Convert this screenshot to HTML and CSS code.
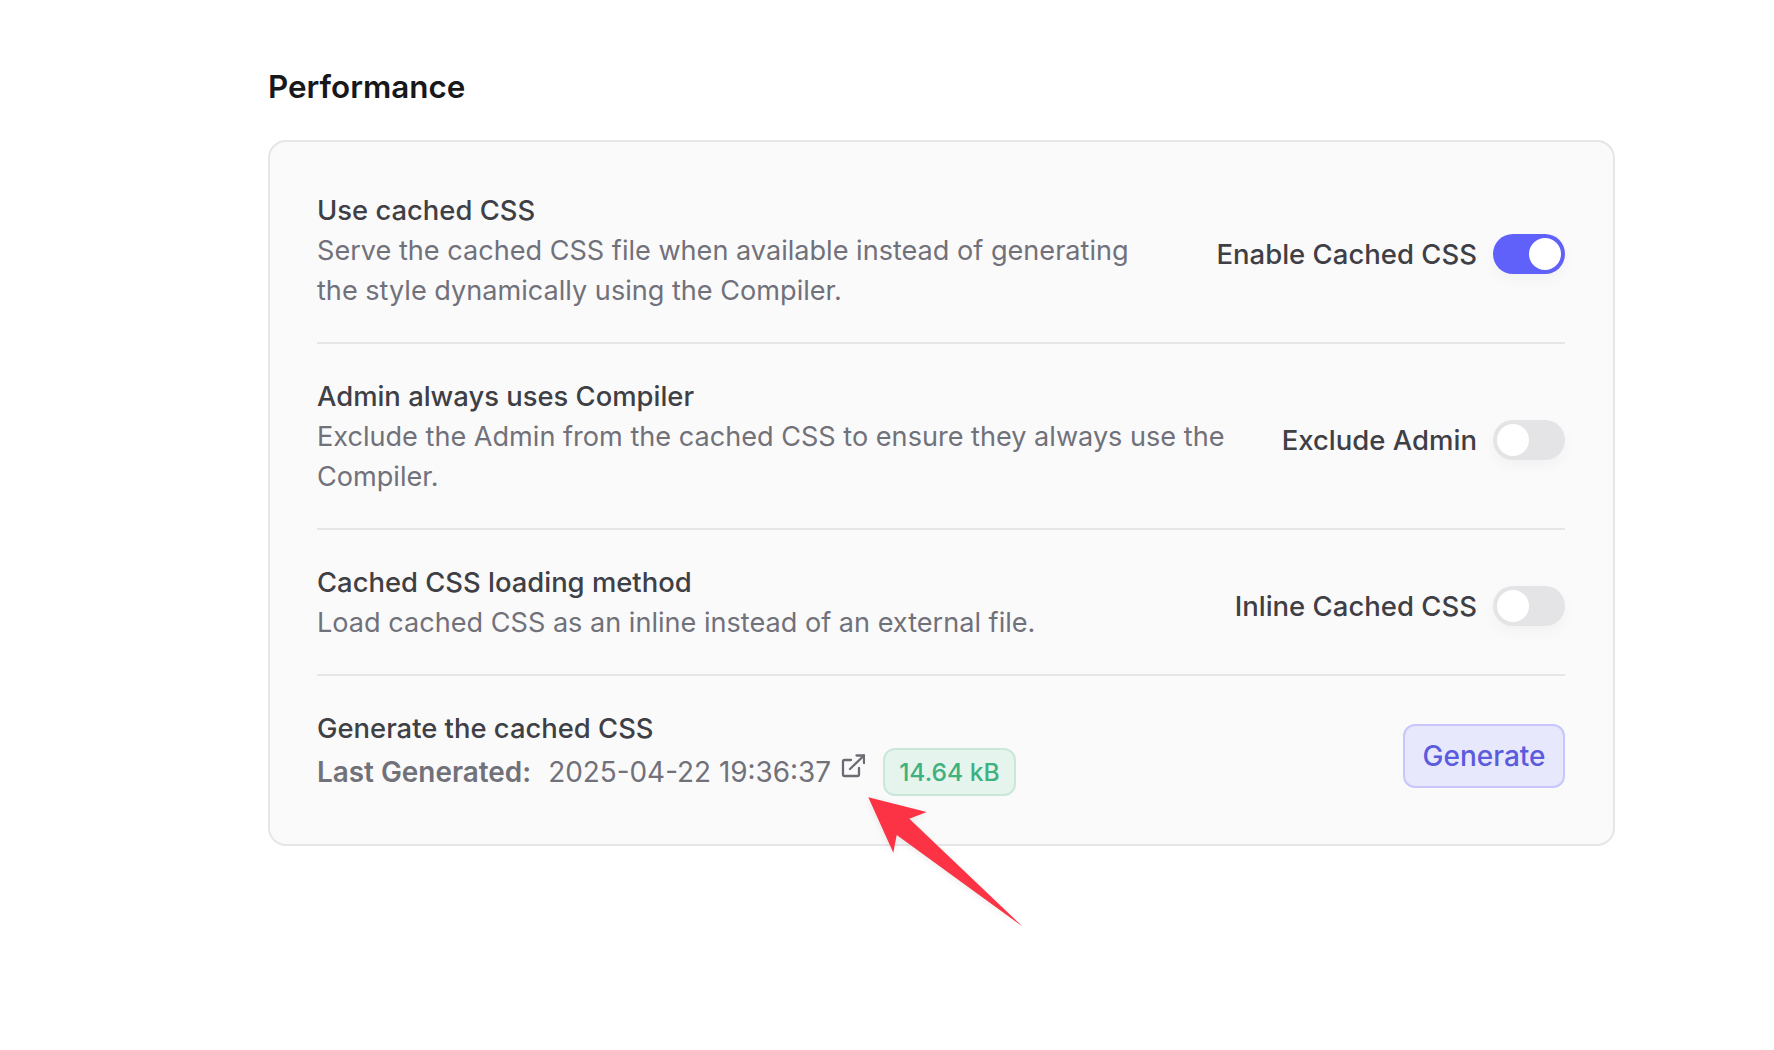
FILE: index.html
```html
<!DOCTYPE html>
<html lang="en">
<head>
<meta charset="utf-8">
<title>Performance</title>
<link rel="stylesheet" href="styles.css">
</head>
<body>
<main class="page">
  <h2 class="heading">Performance</h2>
  <section class="card">
    <div class="row">
      <div class="text">
        <div class="title">Use cached CSS</div>
        <div class="desc">Serve the cached CSS file when available instead of generating the style dynamically using the Compiler.</div>
      </div>
      <div class="control"><span class="label">Enable Cached CSS</span><span class="toggle on"><span class="knob"></span></span></div>
    </div>
    <div class="row">
      <div class="text">
        <div class="title">Admin always uses Compiler</div>
        <div class="desc">Exclude the Admin from the cached CSS to ensure they always use the Compiler.</div>
      </div>
      <div class="control"><span class="label">Exclude Admin</span><span class="toggle"><span class="knob"></span></span></div>
    </div>
    <div class="row">
      <div class="text">
        <div class="title">Cached CSS loading method</div>
        <div class="desc">Load cached CSS as an inline instead of an external file.</div>
      </div>
      <div class="control"><span class="label">Inline Cached CSS</span><span class="toggle"><span class="knob"></span></span></div>
    </div>
    <div class="row last">
      <div class="text">
        <div class="title">Generate the cached CSS</div>
        <div class="meta">
          <strong class="meta-key">Last Generated:</strong>
          <span class="meta-date">2025-04-22 19:36:37</span>
          <svg class="ext" viewBox="0 0 24 24" fill="none" stroke="currentColor" stroke-width="2.3" stroke-linecap="round" stroke-linejoin="round"><path d="M10 6H3.500A1.500 1.500 0 0 0 2 7.500V20.500A1.500 1.500 0 0 0 3.500 22H16.500A1.500 1.500 0 0 0 18 20.500V14"/><path d="M9 15L23 1.500"/><path d="M15.500 1.500H23V9"/></svg>
          <span class="badge">14.64 kB</span>
        </div>
      </div>
      <button class="btn" type="button">Generate</button>
    </div>
  </section>
  <svg class="arrow" viewBox="0 0 1774 1050" aria-hidden="true"><polygon points="868.300,797.300 926.700,812 909.300,818.700 1022.500,926.500 896.700,835 893.300,852.700"/></svg>
</main>
</body>
</html>
```
FILE: styles.css
```css
* { box-sizing: border-box; }
html, body { margin: 0; background: #fff; }
body {
  width: 1774px;
  height: 1050px;
  overflow: hidden;
  font-family: Inter, "Liberation Sans", sans-serif;
  color: #3f3f46;
}
.page { padding: 67px 160px 0 268px; }
.heading {
  margin: 0 0 33px;
  font-size: 31.400px;
  line-height: 40px;
  font-weight: 600;
  color: #18181b;
}
.card {
  width: 1347px;
  margin-left: -0.500px;
  padding: 48px 47.500px 40px;
  background: #fafafb;
  border: 2px solid #e6e6e8;
  border-radius: 18px;
}
.row {
  display: flex;
  align-items: center;
  justify-content: space-between;
  gap: 48px;
  padding: 32px 0 24px;
  border-bottom: 2px solid #e6e6e8;
}
.row:first-child { padding-top: 0; }
.row.last { border-bottom: 0; padding-bottom: 0; }
.text { padding-bottom: 7px; }
.last .text { padding-bottom: 8px; }
.title {
  font-size: 27.400px;
  line-height: 40px;
  font-weight: 500;
  color: #3f3f46;
}
.desc {
  padding-top: 1px;
  font-size: 27.100px;
  line-height: 40px;
  color: #71717a;
}
.control {
  display: flex;
  align-items: center;
  gap: 16px;
  flex: none;
}
.label {
  font-size: 27.500px;
  line-height: 40px;
  font-weight: 500;
  color: #3f3f46;
  white-space: nowrap;
}
.toggle {
  display: flex;
  width: 72px;
  height: 40px;
  padding: 4px;
  border-radius: 20px;
  background: #e4e4e7;
  box-shadow: 0 6px 14px rgba(0, 0, 0, .035);
}
.toggle.on {
  justify-content: flex-end;
  background: #6060fa;
}
.knob {
  width: 32px;
  height: 32px;
  border-radius: 50%;
  background: #fff;
}
.meta {
  display: flex;
  align-items: center;
  height: 48px;
  font-size: 27.900px;
  color: #71717a;
}
.meta-key { font-weight: 600; margin-right: 17px; }
.ext {
  width: 24px;
  height: 24px;
  margin: -12px 0 0 10px;
  color: #6b6b73;
}
.badge {
  margin-left: 18px;
  padding: 0 14px;
  height: 48px;
  line-height: 45px;
  border: 2px solid #c9e8d9;
  border-radius: 12px;
  background: #e6f4ee;
  color: #3fb17f;
  font-size: 24.600px;
  font-weight: 500;
}
.btn {
  width: 162px;
  height: 64px;
  padding: 0;
  border: 2px solid #c8c6fb;
  border-radius: 12px;
  background: #e8e8fd;
  color: #5b5bde;
  font: 500 28px Inter, "Liberation Sans", sans-serif;
}
.arrow {
  position: absolute;
  left: 0;
  top: 0;
  width: 1774px;
  height: 1050px;
  pointer-events: none;
  fill: #fb3344;
  filter: drop-shadow(0 2px 3px rgba(0, 0, 0, .08));
}
```
